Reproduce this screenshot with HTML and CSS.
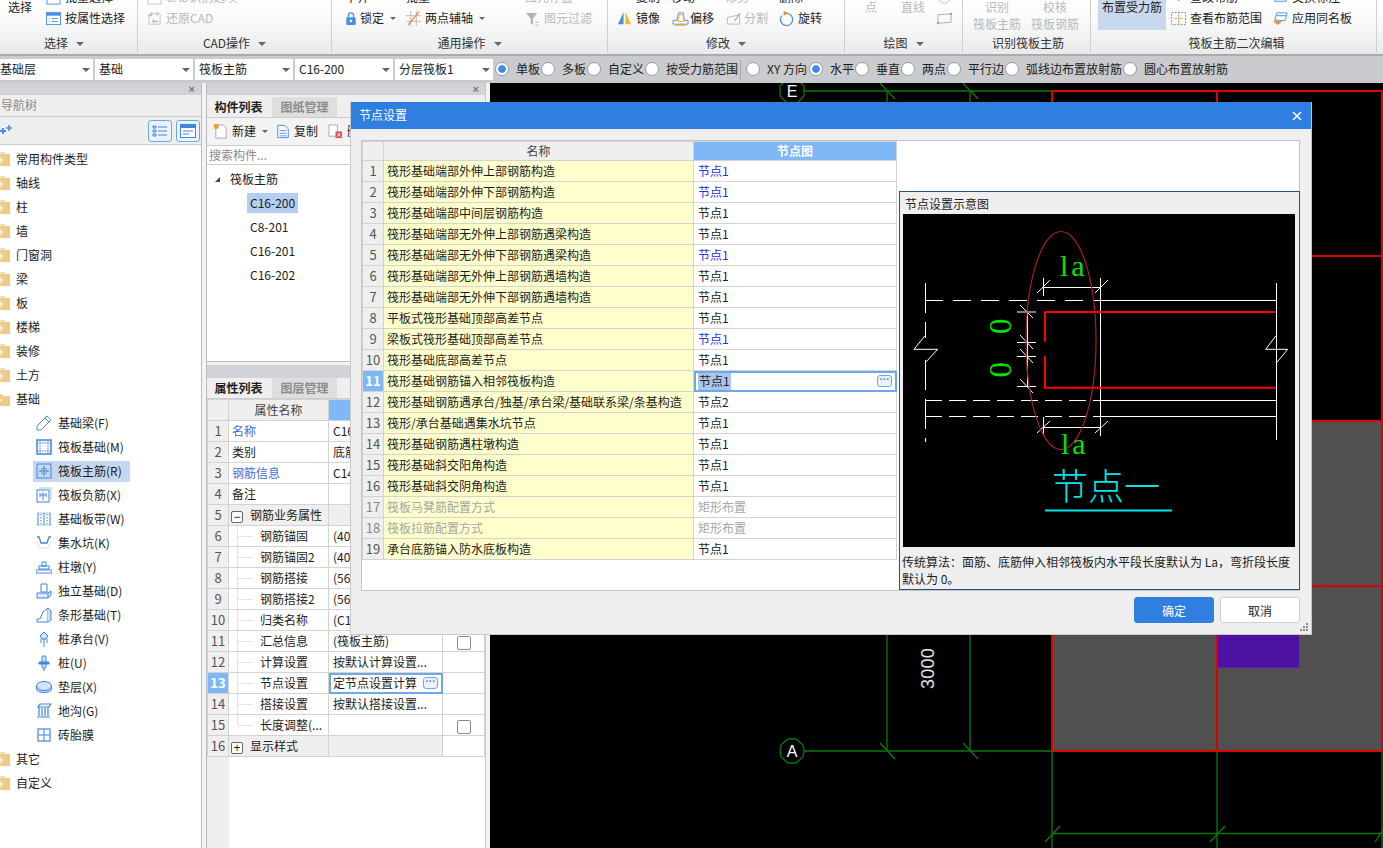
FILE: index.html
```html
<!DOCTYPE html>
<html lang="zh-CN">
<head>
<meta charset="utf-8">
<title>节点设置</title>
<link rel="stylesheet" href="styles.css">
</head>
<body>
<svg class="defs" width="0" height="0">
  <symbol id="folder" viewBox="0 0 16 16"><path d="M3 1h8v1.500H3z" fill="#f2d9a6"/><rect x="0" y="3" width="16" height="12" fill="#eecb88"/><path d="M5 6v2H3v2h2v2h2v-2h2V8H7V6z" fill="#fff" opacity=".75"/></symbol>
</svg>
<header class="ribbon">
  <section class="group g1">
    <div class="tools">
      <div class="big">选择</div>
      <div class="col m14">
        <div class="tool"><svg class="ic" viewBox="0 0 16 16"><rect x="1" y="1" width="14" height="14" fill="#fff" stroke="#4a90e2"/></svg>批量选择</div>
        <div class="tool"><svg class="ic" viewBox="0 0 16 16"><rect x=".5" y="1.500" width="15" height="13" fill="#fff" stroke="#4a90e2"/><rect x="1" y="2" width="14" height="3" fill="#4a90e2"/><path d="M3 8h1M6 8h7M3 11h1M6 11h7" stroke="#4a90e2"/></svg>按属性选择</div>
      </div>
    </div>
    <div class="glabel pr7">选择<i class="caret"></i></div>
  </section>
  <section class="group g2">
    <div class="tools">
      <div class="col dim">
        <div class="tool"><svg class="ic" viewBox="0 0 16 16"><rect x="1" y="1" width="14" height="14" fill="none" stroke="#c4c4c4"/></svg>CAD识别选项</div>
        <div class="tool"><svg class="ic" viewBox="0 0 16 16"><path d="M2 3h12v11H2z" fill="none" stroke="#c4c4c4"/><path d="M5 1v4M11 1v4M1 5h4M12 11H6l2-2M6 11l2 2" fill="none" stroke="#bbb" stroke-width="1.300"/></svg>还原CAD</div>
      </div>
    </div>
    <div class="glabel">CAD操作<i class="caret"></i></div>
  </section>
  <section class="group g3">
    <div class="tools">
      <div class="col">
        <div class="tool">平齐<i class="caret"></i></div>
        <div class="tool"><svg class="ic lock" viewBox="0 0 14 16"><path d="M4 7V4.500a3 3 0 0 1 6 0V7" fill="none" stroke="#4a90e2" stroke-width="1.500"/><rect x="1.500" y="6.500" width="11" height="9" rx="1" fill="#4a90e2"/><circle cx="7" cy="11" r="1.500" fill="#fff"/></svg>锁定<i class="caret sm"></i></div>
      </div>
      <div class="col m10">
        <div class="tool">批量</div>
        <div class="tool"><svg class="ic" viewBox="0 0 16 16"><path d="M5 0v16M11 0v16M0 5h16M0 11h16" stroke="#bbb"/><path d="M2 15L14 1" stroke="#e58a2e" stroke-width="1.300"/></svg>两点辅轴<i class="caret sm"></i></div>
      </div>
      <div class="col m40 dim">
        <div class="tool">图元存盘</div>
        <div class="tool"><svg class="ic" viewBox="0 0 16 16"><path d="M1 2h12L8.500 8v7L6 13V8z" fill="#b4b4b4"/><path d="M11 12h4M11 15h4" stroke="#bbb"/></svg>图元过滤</div>
      </div>
    </div>
    <div class="glabel">通用操作<i class="caret"></i></div>
  </section>
  <section class="group g4">
    <div class="tools">
      <div class="col">
        <div class="tool"><svg class="ic" viewBox="0 0 16 16"><path d="M4 2l4 5 4-5z" fill="#4a90e2"/></svg>复制</div>
        <div class="tool"><svg class="ic" viewBox="0 0 16 16"><path d="M7 1v13H1z" fill="#4a90e2"/><path d="M9 1v13h6z" fill="#f5b52e"/></svg>镜像</div>
      </div>
      <div class="col m11">
        <div class="tool wide">移动</div>
        <div class="tool wide"><svg class="ic w18" viewBox="0 0 18 16"><path d="M1 14V10h4l2-8h5l1 8h4v4z" fill="#fff" stroke="#4a90e2"/><path d="M3 15h12" stroke="#f5a623" stroke-width="1.500"/><path d="M6 11h7l-1-7H8z" fill="none" stroke="#f5a623"/></svg>偏移</div>
      </div>
      <div class="col m11 dim">
        <div class="tool">修剪</div>
        <div class="tool"><svg class="ic w15" viewBox="0 0 16 16"><path d="M1 7l13-3v10H1z" fill="none" stroke="#bbb"/><path d="M8 10l6-8 1 1-6 8z" fill="#aaa"/></svg>分割</div>
      </div>
      <div class="col m11">
        <div class="tool">删除</div>
        <div class="tool"><svg class="ic" viewBox="0 0 16 16"><path d="M8 2.500a6.500 6.500 0 1 1-5 2.400" fill="none" stroke="#4a90e2" stroke-width="1.300"/><path d="M5 0l5 2-5 3z" fill="#e58a2e"/></svg>旋转</div>
      </div>
    </div>
    <div class="glabel">修改<i class="caret"></i></div>
  </section>
  <section class="group g5">
    <div class="tools dim">
      <div class="big">点</div>
      <div class="big m24">直线</div>
      <div class="col m12">
        <div class="tool"><svg class="ic" viewBox="0 0 16 16"><circle cx="8" cy="8" r="6" fill="none" stroke="#bbb"/></svg></div>
        <div class="tool"><svg class="ic" viewBox="0 0 16 16"><path d="M1 4l14-1v9L1 13z" fill="none" stroke="#aaa"/><rect x="0" y="12" width="2" height="2" fill="#999"/><rect x="14" y="2" width="2" height="2" fill="#999"/></svg></div>
      </div>
    </div>
    <div class="glabel">绘图<i class="caret"></i></div>
  </section>
  <section class="group g6">
    <div class="tools dim">
      <div class="big ctr">识别<br>筏板主筋</div>
      <div class="big ctr m10">校核<br>筏板钢筋</div>
    </div>
    <div class="glabel">识别筏板主筋</div>
  </section>
  <section class="group g7">
    <div class="tools">
      <div class="active">布置受力筋</div>
      <div class="col m5">
        <div class="tool"><svg class="ic" viewBox="0 0 16 16"><path d="M8 12l-3-3h6z" fill="#e58a2e"/></svg>查改布筋</div>
        <div class="tool"><svg class="ic" viewBox="0 0 16 16"><rect x=".5" y="1.500" width="15" height="13" fill="none" stroke="#4a90e2" stroke-dasharray="2 1.500"/><path d="M8 1v14M4 8h8" stroke="#e58a2e" stroke-dasharray="2 1"/></svg>查看布筋范围</div>
      </div>
      <div class="col m11">
        <div class="tool"><svg class="ic" viewBox="0 0 16 16"><rect x="2" y="2" width="12" height="10" fill="none" stroke="#4a90e2"/></svg>交换标注</div>
        <div class="tool"><svg class="ic" viewBox="0 0 16 16"><path d="M4 2h11l-2 8H2z" fill="#fff" stroke="#4a90e2"/><path d="M4 5h10" stroke="#4a90e2"/><path d="M0 11h10l-5 4z" fill="#e58a2e"/></svg>应用同名板</div>
      </div>
    </div>
    <div class="glabel">筏板主筋二次编辑</div>
  </section>
</header>

<nav class="optbar">
  <div class="sel first"><span>基础层</span><i class="caret"></i></div>
  <div class="sel"><span>基础</span><i class="caret"></i></div>
  <div class="sel"><span>筏板主筋</span><i class="caret"></i></div>
  <div class="sel"><span>C16-200</span><i class="caret"></i></div>
  <div class="sel"><span>分层筏板1</span><i class="caret"></i></div>
  <div class="radios">
    <label class="rd on">单板</label>
    <label class="rd">多板</label>
    <label class="rd">自定义</label>
    <label class="rd">按受力筋范围</label>
    <b class="vsep"></b>
    <label class="rd xy">XY 方向</label>
    <label class="rd on">水平</label>
    <label class="rd">垂直</label>
    <label class="rd">两点</label>
    <label class="rd">平行边</label>
    <label class="rd">弧线边布置放射筋</label>
    <label class="rd">圆心布置放射筋</label>
  </div>
</nav>

<main class="main">
  <aside class="nav">
    <div class="bar"><span class="x">×</span></div>
    <div class="navtitle">导航树</div>
    <div class="navtools">
      <svg class="spark" viewBox="0 0 14 12"><path d="M0 6h6M3 3v6" stroke="#4a90e2" stroke-width="2"/><path d="M6 3h6M9 0v6" stroke="#4a90e2" stroke-width="1.600"/></svg>
      <span class="navbtn"><svg viewBox="0 0 16 14" width="16" height="14"><path d="M1 2h3v2H1zM1 6h3v2H1zM1 10h3v2H1z" fill="none" stroke="#3f86dd"/><path d="M6 3h9M6 7h9M6 11h9" stroke="#3f86dd"/></svg></span>
      <span class="navbtn"><svg viewBox="0 0 16 14" width="16" height="14"><rect x=".5" y=".5" width="15" height="13" fill="#fff" stroke="#3f86dd"/><path d="M1 1h14v3H1z" fill="#3f86dd"/><path d="M3 7h10M3 10h6" stroke="#3f86dd"/></svg></span>
    </div>
    <ul class="tree">
      <li class="node"><svg class="fd"><use href="#folder"/></svg>常用构件类型</li>
      <li class="node"><svg class="fd"><use href="#folder"/></svg>轴线</li>
      <li class="node"><svg class="fd"><use href="#folder"/></svg>柱</li>
      <li class="node"><svg class="fd"><use href="#folder"/></svg>墙</li>
      <li class="node"><svg class="fd"><use href="#folder"/></svg>门窗洞</li>
      <li class="node"><svg class="fd"><use href="#folder"/></svg>梁</li>
      <li class="node"><svg class="fd"><use href="#folder"/></svg>板</li>
      <li class="node"><svg class="fd"><use href="#folder"/></svg>楼梯</li>
      <li class="node"><svg class="fd"><use href="#folder"/></svg>装修</li>
      <li class="node"><svg class="fd"><use href="#folder"/></svg>土方</li>
      <li class="node"><svg class="fd" viewBox="0 0 16 16"><path d="M0 3h7l2 2h7v10H0z" fill="#eecb88"/><path d="M0 8h8v2H0z" fill="#fff" opacity=".8"/></svg>基础</li>
      <li class="leaf"><span class="item"><svg class="li" viewBox="0 0 16 16"><path d="M1 15v-4L11 1l4 4L5 15z" fill="#fff" stroke="#4a90e2"/><path d="M9 3l4 4" stroke="#4a90e2"/></svg>基础梁(F)</span></li>
      <li class="leaf"><span class="item"><svg class="li" viewBox="0 0 16 16"><rect x="1" y="1" width="14" height="14" fill="#fff" stroke="#3f86dd" stroke-width="1.500"/><path d="M4 1v14M12 1v14M1 4h14M1 12h14" stroke="#3f86dd" stroke-dasharray="1.500 1"/></svg>筏板基础(M)</span></li>
      <li class="leaf"><span class="item sel-item"><svg class="li" viewBox="0 0 16 16"><rect x="1" y="1" width="14" height="14" fill="none" stroke="#3f86dd"/><path d="M8 3v10M3 8h10" stroke="#3f86dd"/><circle cx="8" cy="8" r="3" fill="none" stroke="#3f86dd" stroke-width=".7"/></svg>筏板主筋(R)</span></li>
      <li class="leaf"><span class="item"><svg class="li" viewBox="0 0 16 16"><rect x="1" y="3" width="12" height="12" fill="#fff" stroke="#3f86dd"/><path d="M3 1h12v12" fill="none" stroke="#9cc3ef"/><path d="M7 5v8M4 8h6M4 6v4M10 6v4" stroke="#3f86dd"/></svg>筏板负筋(X)</span></li>
      <li class="leaf"><span class="item"><svg class="li" viewBox="0 0 16 16"><path d="M1 2h14M1 14h14" stroke="#9cc3ef"/><path d="M2 2v12M14 2v12M8 2v12" stroke="#3f86dd"/><path d="M5 3v10M11 3v10" stroke="#3f86dd" stroke-dasharray="1.500 1.500"/></svg>基础板带(W)</span></li>
      <li class="leaf"><span class="item"><svg class="li" viewBox="0 0 16 16"><path d="M1 2h2l2 6h6l2-6h2" fill="none" stroke="#3f86dd" stroke-width="1.300"/><path d="M1 7l3 6h8l3-6" fill="none" stroke="#9cc3ef" stroke-dasharray="1 1"/></svg>集水坑(K)</span></li>
      <li class="leaf"><span class="item"><svg class="li" viewBox="0 0 16 16"><path d="M6 3h4v4H6zM3 7h10v3H3z" fill="none" stroke="#3f86dd"/><path d="M0 11h16v3H0z" fill="none" stroke="#3f86dd"/></svg>柱墩(Y)</span></li>
      <li class="leaf"><span class="item"><svg class="li" viewBox="0 0 16 16"><path d="M5 1h6v8H5z" fill="#fff" stroke="#3f86dd"/><path d="M1 10h11v5H1zM12 10l3-2v4l-3 3" fill="#dceafb" stroke="#3f86dd"/></svg>独立基础(D)</span></li>
      <li class="leaf"><span class="item"><svg class="li" viewBox="0 0 16 16"><path d="M1 15v-3h3l3-7 5-4v14z" fill="#fff" stroke="#3f86dd"/><path d="M12 1l3 3v9l-3 2" fill="#cfe2f9" stroke="#3f86dd"/></svg>条形基础(T)</span></li>
      <li class="leaf"><span class="item"><svg class="li" viewBox="0 0 16 16"><path d="M8 1l4 4-2 3H6L4 5z" fill="#cfe2f9" stroke="#3f86dd"/><path d="M5 8v4M8 8v8M11 8v4" stroke="#3f86dd"/></svg>桩承台(V)</span></li>
      <li class="leaf"><span class="item"><svg class="li" viewBox="0 0 16 16"><rect x="6" y="1" width="4" height="12" rx="1" fill="#cfe2f9" stroke="#3f86dd"/><path d="M3 7h10v2H3zM8 13v3" stroke="#3f86dd" fill="#3f86dd"/></svg>桩(U)</span></li>
      <li class="leaf"><span class="item"><svg class="li" viewBox="0 0 16 16"><path d="M.5 7v3c0 2 3 3.500 7.500 3.500s7.500-1.500 7.500-3.500V7" fill="#b9d4f5" stroke="#3f86dd"/><ellipse cx="8" cy="7" rx="7.500" ry="4.500" fill="#d5e5f9" stroke="#3f86dd"/></svg>垫层(X)</span></li>
      <li class="leaf"><span class="item"><svg class="li" viewBox="0 0 16 16"><path d="M2 4l2-3h11l-2 3zM1 4h12M3 4v9M12 4v9M6 5v8M9 5v8M1 14h13" fill="#fff" stroke="#3f86dd" stroke-width="1.200"/></svg>地沟(G)</span></li>
      <li class="leaf"><span class="item"><svg class="li" viewBox="0 0 16 16"><rect x="2" y="2" width="12" height="12" fill="none" stroke="#3f86dd" stroke-width="1.200"/><path d="M8 2v12M2 8h12" stroke="#3f86dd"/></svg>砖胎膜</span></li>
      <li class="node"><svg class="fd"><use href="#folder"/></svg>其它</li>
      <li class="node"><svg class="fd"><use href="#folder"/></svg>自定义</li>
    </ul>
  </aside>

  <div class="mid">
    <section class="listpane">
      <div class="bar"><span class="x">×</span></div>
      <div class="tabs"><span class="tab on">构件列表</span><span class="tab">图纸管理</span></div>
      <div class="listtools">
        <svg class="ic" viewBox="0 0 16 16"><path d="M3 1h8l3 3v11H3z" fill="#fff" stroke="#aaa"/><rect x="1" y="0" width="5" height="5" fill="#f0a030"/></svg><span>新建</span><i class="caret sm"></i>
        <svg class="ic copy" viewBox="0 0 16 16"><path d="M2 1h8l4 4v10H2z" fill="#fff" stroke="#3f86dd"/><path d="M4 7h8M4 10h8M4 13h8" stroke="#3f86dd"/></svg><span>复制</span>
        <svg class="ic copy2" viewBox="0 0 16 16"><path d="M1 1h9v12H1z" fill="#fff" stroke="#aaa"/><rect x="8" y="8" width="7" height="7" fill="#e05050"/><path d="M9.500 9.500l4 4M13.500 9.500l-4 4" stroke="#fff"/></svg><span>删除</span>
      </div>
      <div class="search">搜索构件...</div>
      <div class="comp">
        <div class="comproot"><i class="tri"></i>筏板主筋</div>
        <div class="compitem cur"><span>C16-200</span></div>
        <div class="compitem"><span>C8-201</span></div>
        <div class="compitem"><span>C16-201</span></div>
        <div class="compitem"><span>C16-202</span></div>
      </div>
    </section>
    <section class="proppane">
      <div class="bar"></div>
      <div class="tabs"><span class="tab on">属性列表</span><span class="tab">图层管理</span></div>
      <table class="prop">
        <colgroup><col class="c1"><col class="c2"><col class="c3"><col class="c4"></colgroup>
        <thead><tr><th></th><th>属性名称</th><th class="hl"></th><th></th></tr></thead>
        <tbody>
          <tr><td class="idx">1</td><td class="lnk">名称</td><td>C16-200</td><td></td></tr>
          <tr><td class="idx">2</td><td>类别</td><td>底筋</td><td></td></tr>
          <tr><td class="idx">3</td><td class="lnk">钢筋信息</td><td>C14-200</td><td></td></tr>
          <tr><td class="idx">4</td><td>备注</td><td></td><td></td></tr>
          <tr><td class="idx">5</td><td class="grp"><i class="pm">−</i>钢筋业务属性</td><td class="gray"></td><td></td></tr>
          <tr><td class="idx">6</td><td class="sub">钢筋锚固</td><td>(40)</td><td></td></tr>
          <tr><td class="idx">7</td><td class="sub">钢筋锚固2</td><td>(40)</td><td></td></tr>
          <tr><td class="idx">8</td><td class="sub">钢筋搭接</td><td>(56)</td><td></td></tr>
          <tr><td class="idx">9</td><td class="sub">钢筋搭接2</td><td>(56)</td><td></td></tr>
          <tr><td class="idx">10</td><td class="sub">归类名称</td><td>(C16-200)</td><td></td></tr>
          <tr><td class="idx">11</td><td class="sub">汇总信息</td><td>(筏板主筋)</td><td class="chk"><i></i></td></tr>
          <tr><td class="idx">12</td><td class="sub">计算设置</td><td>按默认计算设置...</td><td></td></tr>
          <tr><td class="idx cur">13</td><td class="sub">节点设置</td><td class="edit"><div class="editin"><span>定节点设置计算</span><i class="more">···</i></div></td><td></td></tr>
          <tr><td class="idx">14</td><td class="sub">搭接设置</td><td>按默认搭接设置...</td><td></td></tr>
          <tr><td class="idx">15</td><td class="sub last">长度调整(...</td><td></td><td class="chk"><i></i></td></tr>
          <tr><td class="idx">16</td><td class="grp"><i class="pm">+</i>显示样式</td><td class="gray"></td><td></td></tr>
        </tbody>
      </table>
      <div class="propfill"></div>
    </section>
  </div>

  <div class="canvas">
    <svg class="cad" viewBox="490 83 893 765" preserveAspectRatio="none">
      <rect x="1052" y="421" width="331" height="330" fill="#505050"/>
      <rect x="1217.500" y="586" width="82" height="82" fill="#4c12a1" stroke="#7030a0"/>
      <g stroke="#e00000" fill="none" stroke-width="2">
        <path d="M1052 91H1383M1052 91V751M1052 751H1383M1382 91V751M1217 91V751M1052 256H1383M1052 421H1383M1052 586H1383"/>
      </g>
      <g stroke="#0a7a0a" fill="none" stroke-width="1.300">
        <path d="M804 91H1052M804 751H1052M887 91V751M970 91V751"/>
        <path d="M880 83L895 99M963 83L978 99M880 743L895 759M963 743L978 759"/>
        <path d="M1052 751V848M1217 751V848M1382 751V848M1052 833.500H1383"/>
        <path d="M1045 842L1060 826M1210 842L1225 826M1375 842L1383 830"/>
        <polygon points="787,79 797,79 804,86 804,96 797,103 787,103 780,96 780,86" fill="#000"/>
        <polygon points="788,739 796,739 803,745 804,751 803,757 796,763 788,763 781,757 780,751 781,745" fill="#000"/>
      </g>
      <text class="bub" x="792" y="97">E</text>
      <text class="bub" x="792" y="757">A</text>
      <text class="dim3000" transform="translate(934 668.500) rotate(-90)">3000</text>
    </svg>
  </div>
</main>

<div class="dialog" role="dialog">
  <div class="dtitle"><span>节点设置</span><svg width="10" height="10" viewBox="0 0 10 10"><path d="M1 1l8 8M9 1l-8 8" stroke="#fff" stroke-width="1.600"/></svg></div>
  <div class="dbody">
    <div class="dbox">
      <table class="nodes">
        <colgroup><col class="n1"><col class="n2"><col class="n3"></colgroup>
        <thead><tr><th></th><th>名称</th><th class="hl">节点图</th></tr></thead>
        <tbody>
          <tr><td class="idx">1</td><td class="y">筏形基础端部外伸上部钢筋构造</td><td class="blue">节点1</td></tr>
          <tr><td class="idx">2</td><td class="y">筏形基础端部外伸下部钢筋构造</td><td class="blue">节点1</td></tr>
          <tr><td class="idx">3</td><td class="y">筏形基础端部中间层钢筋构造</td><td>节点1</td></tr>
          <tr><td class="idx">4</td><td class="y">筏形基础端部无外伸上部钢筋遇梁构造</td><td>节点1</td></tr>
          <tr><td class="idx">5</td><td class="y">筏形基础端部无外伸下部钢筋遇梁构造</td><td class="blue">节点1</td></tr>
          <tr><td class="idx">6</td><td class="y">筏形基础端部无外伸上部钢筋遇墙构造</td><td>节点1</td></tr>
          <tr><td class="idx">7</td><td class="y">筏形基础端部无外伸下部钢筋遇墙构造</td><td>节点1</td></tr>
          <tr><td class="idx">8</td><td class="y">平板式筏形基础顶部高差节点</td><td>节点1</td></tr>
          <tr><td class="idx">9</td><td class="y">梁板式筏形基础顶部高差节点</td><td class="blue">节点1</td></tr>
          <tr><td class="idx">10</td><td class="y">筏形基础底部高差节点</td><td>节点1</td></tr>
          <tr><td class="idx cur">11</td><td class="y">筏形基础钢筋锚入相邻筏板构造</td><td class="edit"><div class="editin"><span class="mark">节点1</span><i class="more">···</i></div></td></tr>
          <tr><td class="idx">12</td><td class="y">筏形基础钢筋遇承台/独基/承台梁/基础联系梁/条基构造</td><td>节点2</td></tr>
          <tr><td class="idx">13</td><td class="y">筏形/承台基础遇集水坑节点</td><td>节点1</td></tr>
          <tr><td class="idx">14</td><td class="y">筏形基础钢筋遇柱墩构造</td><td>节点1</td></tr>
          <tr><td class="idx">15</td><td class="y">筏形基础斜交阳角构造</td><td>节点1</td></tr>
          <tr><td class="idx">16</td><td class="y">筏形基础斜交阴角构造</td><td>节点1</td></tr>
          <tr class="off"><td class="idx">17</td><td class="y">筏板马凳筋配置方式</td><td>矩形布置</td></tr>
          <tr class="off"><td class="idx">18</td><td class="y">筏板拉筋配置方式</td><td>矩形布置</td></tr>
          <tr><td class="idx">19</td><td class="y">承台底筋锚入防水底板构造</td><td>节点1</td></tr>
        </tbody>
      </table>
      <div class="preview">
        <div class="ptitle">节点设置示意图</div>
        <svg class="pic" viewBox="903 214 392 333">
          <rect x="903" y="214" width="392" height="333" fill="#000"/>
          <g stroke="#fff" fill="none">
            <path d="M925.500 283V338M925.500 360V442" stroke-dasharray="30 9"/>
            <path d="M925 300.500H1100" stroke-dasharray="18 10"/>
            <path d="M925 400.500H1100M925 416.500H1100" stroke-dasharray="17 7"/>
            <path d="M1100 300.500H1276M1100 400.500H1276M1100 416.500H1276"/>
            <path d="M1276.500 283V440M1100.500 278V436"/>
            <path d="M925 335.700L914 349.300H937.700L925.700 362.300M1276 335.700L1265.700 349.300H1287.700L1277 362.300"/>
            <path d="M1043 287.500H1100M1043 427.500H1100M1043.500 278V296M1043.500 417V436"/>
            <path d="M1037 293L1050 280M1095 293L1108 280M1037 433L1050 421M1095 433L1108 421"/>
            <path d="M1027.500 312V387M1017 312H1036M1017 342.500H1036M1017 356.500H1036M1017 386.500H1036"/>
            <path d="M1020 305L1033 318M1020 335L1033 349M1020 349L1033 363M1020 379L1033 393"/>
          </g>
          <path d="M1276 312H1045V341.700M1045 356V387.700H1276" stroke="#f00" stroke-width="2" fill="none"/>
          <ellipse cx="1061" cy="340.500" rx="35" ry="109" fill="none" stroke="#a52020" stroke-width="1.200"/>
          <text class="la" x="1060" y="276">la</text>
          <text class="la" x="1061" y="454">la</text>
          <text class="zero" transform="translate(990 326.500) rotate(90) translate(-8 0)">0</text>
          <text class="zero" transform="translate(990 370) rotate(90) translate(-8 0)">0</text>
          <text class="jd" x="1052" y="500">节点一</text>
          <path d="M1045 510.500H1172" stroke="#00e5e5" stroke-width="2"/>
        </svg>
        <p class="pdesc">传统算法：面筋、底筋伸入相邻筏板内水平段长度默认为 La，弯折段长度<br>默认为 0。</p>
      </div>
    </div>
    <div class="dfoot">
      <button class="btn pri">确定</button>
      <button class="btn">取消</button>
    </div>
  </div>
  <svg class="grip" width="9" height="9" viewBox="0 0 9 9"><path d="M6 0h2v2H6zM3 3h2v2H3zM6 3h2v2H6zM0 6h2v2H0zM3 6h2v2H3zM6 6h2v2H6z" fill="#8a8a8a"/></svg>
</div>
</body>
</html>
```

FILE: styles.css
```css
*,*::before,*::after{box-sizing:border-box}
html,body{margin:0;height:100%}
body{width:1383px;height:848px;overflow:hidden;position:relative;background:#f3f3f3;font:12px/1.2 "Noto Sans CJK SC","Noto Sans",sans-serif;color:#1c1c1c;display:flex;flex-direction:column}
.defs{position:absolute}
i{font-style:normal}
ul{list-style:none;margin:0;padding:0}

/* ribbon */
.ribbon{height:56px;flex:none;display:flex;border-bottom:2px solid #a9abae;background:linear-gradient(#fff,#fbfbfb 30%,#e9ebeb);overflow:hidden}
.group{height:53px;border-right:1px solid #cfd0d1;display:flex;flex-direction:column;flex:none}
.g1{width:138px}
.g1 .tools{padding-left:8px}
.g2{width:194px}
.g2 .tools{padding-left:9px}
.g3{width:276px}
.g3 .tools{padding-left:13px}
.g4{width:237px}
.g4 .tools{padding-left:9px}
.g5{width:118px}
.g5 .tools{padding-left:20px}
.g6{width:128px}
.g6 .tools{padding-left:10px}
.g6 .glabel{padding-left:3px}
.g7{width:286px}
.g7 .tools{padding-left:7px}
.g7 .glabel{padding-left:6px}
.tools{height:32px;display:flex;align-items:flex-end;overflow:hidden;flex:none;padding-bottom:3px}
.col{display:flex;flex-direction:column;flex:none}
.tool{height:21px;display:flex;align-items:center;gap:4px;white-space:nowrap;flex:none}
.ic{width:15px;height:15px;flex:none}
.ic.lock{width:12px;margin-right:-1px}
.ic.w18{width:19px;margin-right:-4px}
.ic.w15{width:18px;margin-right:-3px}
.big{align-self:flex-start;line-height:17px;margin-top:-2px;flex:none}
.ctr{text-align:center}
.m5{margin-left:5px}
.m10{margin-left:10px}
.m11{margin-left:11px}
.m12{margin-left:12px}
.m14{margin-left:14px}
.m24{margin-left:24px}
.m40{margin-left:40px}
.dim,.dim .tool{color:#b9b9b9}
.active{align-self:flex-start;width:68px;height:30px;margin-top:0;background:#c7d8ef;text-align:center;line-height:14px;color:#222;flex:none}
.glabel{height:21px;padding-top:2px;display:flex;align-items:center;justify-content:center;color:#333;flex:none}
.pr7{padding-right:9px}
.caret{display:inline-block;width:0;height:0;border:4px solid transparent;border-top-color:#666;border-bottom:0;margin-left:8px}
.caret.sm{margin-left:2px;border-width:3px;border-bottom:0}

/* option bar */
.optbar{height:27px;flex:none;background:#c9cbcf;display:flex;align-items:center}
.sel{width:98px;height:21px;margin-right:2px;background:#fff;display:flex;align-items:center;justify-content:space-between;padding:0 3px 0 4px;flex:none}
.sel.first{width:93px;padding-left:0}
.radios{display:flex;align-items:center}
.rd{display:flex;align-items:center;gap:7px;margin-right:1px;white-space:nowrap}
.rd::before{content:"";width:14px;height:14px;border-radius:50%;background:#fff;border:1px solid #9a9a9a;flex:none}
.rd.on::before{background:radial-gradient(circle,#3d8bf0 0 3.500px,#fff 4px)}
.rd.xy{margin-right:2px}
.vsep{width:1px;height:20px;background:#aaa;margin:0 5px 0 1px}

/* main */
.main{flex:1;min-height:0;display:flex}
.bar{height:12px;background:#d2d3d8;display:flex;justify-content:flex-end;align-items:center;padding-right:6px;flex:none}
.x{color:#777;font:bold 11px/12px "Liberation Sans",sans-serif}
.nav{width:202px;flex:none;border-right:1px solid #b9bbbd;background:#fff;display:flex;flex-direction:column;margin-right:4px}
.navtitle{height:22px;background:#efefef;color:#8a8a8a;padding-left:1px;display:flex;align-items:center;border-bottom:1px solid #ccc;flex:none}
.navtools{height:28px;background:#efefef;border-bottom:1px solid #ccc;display:flex;align-items:center;justify-content:flex-end;padding-right:1px;gap:4px;flex:none}
.spark{width:14px;height:12px;margin-right:auto}
.navbtn{width:24px;height:22px;border:1px solid #6aa8ee;border-radius:3px;background:#eaf2fd;display:flex;align-items:center;justify-content:center}
.tree{padding-top:2px}
.node{height:24px;display:flex;align-items:center;white-space:nowrap}
.fd{width:16px;height:16px;margin-left:-6px;margin-right:6px;flex:none}
.leaf{height:24px;padding-left:33px;display:flex;align-items:center}
.item{width:97px;height:21px;display:flex;align-items:center;padding-left:3px;gap:6px;white-space:nowrap}
.sel-item{background:#c6d8f0}
.li{width:16px;height:16px;flex:none}

.mid{width:280px;flex:none;display:flex;flex-direction:column;margin-right:4px;border-left:1px solid #b9bbbd;border-right:1px solid #c8c8c8}
.listpane{height:279px;flex:none;display:flex;flex-direction:column;border-bottom:1px solid #b9bbbd;background:#fff}
.proppane{flex:1;margin-top:3px;display:flex;flex-direction:column;background:#fff;min-height:0}
.tabs{height:23px;padding-top:2px;background:#efefef;display:flex;border-bottom:1px solid #ccc;flex:none}
.tab{width:65px;height:20px;display:flex;align-items:center;justify-content:center;background:#dedede;color:#8c8c8c;font-weight:700}
.tab.on{background:#efefef;color:#222;padding-right:2px}
.proppane .bar{height:13px}
.proppane .tabs{height:21px;padding-top:0}
.listtools{height:28px;background:#f3f3f3;display:flex;align-items:center;padding-left:6px;gap:4px;border-bottom:1px solid #ccc;white-space:nowrap;flex:none;overflow:hidden}
.copy{margin-left:4px;width:14px}
.copy2{margin-left:6px;width:15px}
.search{height:19px;border-bottom:1px solid #ccc;color:#8a8a8a;padding-left:2px;display:flex;align-items:center;flex:none}
.comp{padding-top:2px;flex:1}
.comproot{height:24px;display:flex;align-items:center;padding-left:23px}
.tri{width:0;height:0;border-left:5px solid transparent;border-bottom:5px solid #444;margin-right:10px;margin-left:-15px}
.compitem{height:24px;padding-left:40px;display:flex;align-items:center}
.compitem span{display:block;padding:0 3px;height:20px;line-height:20px}
.cur span{background:#b3cef0}

table{border-collapse:collapse;table-layout:fixed;flex:none}
th,td{height:21px;padding:0 4px;font-weight:400;border:1px solid #d3d3d3;white-space:nowrap;overflow:hidden;text-overflow:ellipsis;line-height:18px}
th{background:#efefef;color:#444;text-align:center}
th.hl{background:#7fb7f7;color:#fff;font-weight:700}
.idx{background:#efefef;color:#555;text-align:center;padding:0;font-size:13px}
.idx.cur{background:#7fb7f7;color:#fff;font-weight:700}

.prop{width:277px}
.c1{width:21px}.c2{width:100px}.c3{width:114px}.c4{width:42px}
.prop td:nth-child(2){padding-left:3px}
.lnk{color:#3a6fe0}
.gray{background:#efefef}
.prop td.grp{background:#efefef;padding-left:2px}
.pm{display:inline-block;width:12px;height:12px;border:1px solid #666;border-radius:2px;background:#fff;font:12px/10px "Liberation Sans",sans-serif;text-align:center;margin-right:7px;vertical-align:-1px}
.prop td.sub{position:relative;padding-left:31px}
.sub::before{content:"";position:absolute;left:8px;top:0;bottom:0;border-left:1px solid #e4e4e4}
.sub::after{content:"";position:absolute;left:8px;top:10px;width:16px;border-top:1px solid #e4e4e4}
.sub.last::before{bottom:10px}
.chk{text-align:center;padding:0}
.chk i{display:inline-block;width:14px;height:14px;border:1px solid #8c8c8c;border-radius:2px;background:#fff;vertical-align:middle}
.edit{padding:0;outline:2px solid #6ea8ea;outline-offset:-2px}
.editin{display:flex;justify-content:space-between;align-items:center;padding:0 4px}
.more{width:15px;height:12px;border:1px solid #6ea8ea;border-radius:3px;background:#eaf2fd;color:#3f86dd;font:bold 10px/8px "Liberation Sans",sans-serif;text-align:center;flex:none}
.propfill{flex:1;width:22px;background:#efefef}

.canvas{flex:1;min-width:0;background:#000}
.cad{display:block;width:100%;height:100%}
.bub{fill:#fff;font:16px "Liberation Sans",sans-serif;text-anchor:middle}
.dim3000{fill:#e4e4e4;font:18px "Liberation Sans",sans-serif;text-anchor:middle;letter-spacing:.2px}

/* dialog */
.dialog{position:absolute;left:350px;top:102px;width:962px;height:533px;background:#efefef;border:1px solid #c6c8cc;border-top:0;display:flex;flex-direction:column}
.dtitle{height:27px;background:#2e7fe0;color:#fff;display:flex;align-items:center;justify-content:space-between;padding:0 9px 0 8px;flex:none}
.dbody{flex:1;padding:11px 11px 0 10px;display:flex;flex-direction:column}
.dbox{height:451px;background:#fff;border:1px solid #c4c4c4;display:flex;align-items:flex-start;flex:none}
.nodes{width:534px}
.n1{width:21px}.n2{width:310px}.n3{width:203px}
.nodes th{height:19px}
.y{background:#ffffcc;padding-left:3px}
.blue{color:#2a2ae0}
.off td{color:#a5a5a5}
.off .idx{color:#888}
.mark{background:#a9c5ec;padding:0 1px}
.preview{width:401px;height:399px;margin:50px 0 0 2px;background:#efefef;border:1px solid #2b4f7e;display:flex;flex-direction:column;flex:none}
.ptitle{height:22px;padding:2px 0 0 5px;display:flex;align-items:center;flex:none}
.pic{display:block;width:392px;height:333px;margin-left:3px;flex:none}
.pdesc{margin:6px 0 0 2px;line-height:17px;white-space:nowrap}
.la{fill:#00e600;font:30px "Liberation Serif",serif;letter-spacing:3px}
.zero{fill:#00e600;font:31px "Liberation Serif",serif}
.jd{fill:#00e5e5;font:200 36px "Noto Sans CJK SC",sans-serif}
.dfoot{display:flex;justify-content:flex-end;gap:6px;padding-top:6px}
.btn{width:80px;height:26px;border:1px solid #d0d0d0;border-radius:3px;background:#fff;font:12px "Noto Sans CJK SC",sans-serif;color:#222;padding:0}
.btn.pri{background:#2e7fe0;border-color:#2e7fe0;color:#fff}
.grip{position:absolute;right:2px;bottom:2px}
```
